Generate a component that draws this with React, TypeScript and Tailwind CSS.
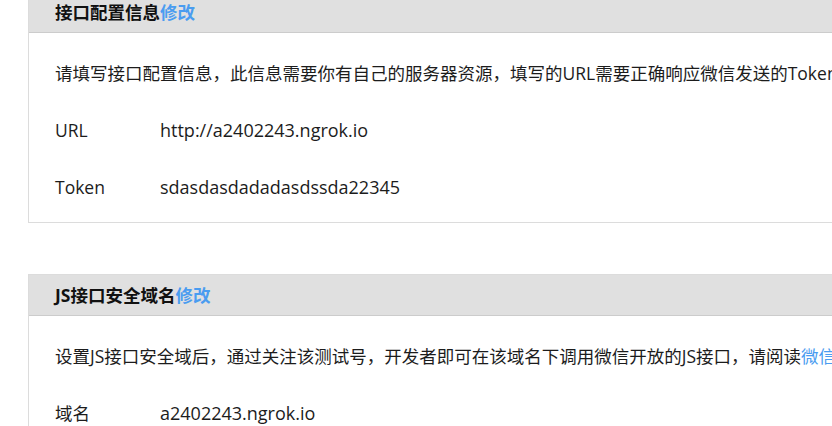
const rows1 = [
  { label: 'URL', value: 'http://a2402243.ngrok.io' },
  { label: 'Token', value: 'sdasdasdadadasdssda22345' },
];

function Panel({ title, children }: { title: string; children: React.ReactNode }) {
  return (
    <div className="border border-[#dcdcdc] bg-white">
      <div className="h-[41px] flex items-center pl-[26px] bg-[#e0e0e0] border-b border-[#cccccc] text-[17.5px] font-bold text-[#111]">
        <span>{title}</span>
        <a className="text-[#4a9cf0] cursor-pointer">修改</a>
      </div>
      <div className="pt-3 pb-[6px] pl-[26px] text-[17.5px] text-[#1c1c1c]">{children}</div>
    </div>
  );
}

function Row({ label, value }: { label: string; value: string }) {
  return (
    <div className="h-[57px] flex items-center whitespace-nowrap">
      <span className="w-[105px] shrink-0">{label}</span>
      <span className="text-[18px]">{value}</span>
    </div>
  );
}

export default function App() {
  return (
    <div
      className="w-[832px] h-[426px] overflow-hidden bg-white"
      style={{ fontFamily: '"Open Sans", "Noto Sans CJK SC", sans-serif' }}
    >
      <div className="-mt-[9px] ml-[28px] w-[900px] flex flex-col gap-[51px]">
        <Panel title="接口配置信息">
          <div className="h-[57px] flex items-center whitespace-nowrap">
            请填写接口配置信息，此信息需要你有自己的服务器资源，填写的URL需要正确响应微信发送的Token验证，请阅读消息接口使用指南。
          </div>
          {rows1.map(r => (
            <Row key={r.label} label={r.label} value={r.value} />
          ))}
        </Panel>

        <Panel title="JS接口安全域名">
          <div className="h-[57px] flex items-center whitespace-nowrap">
            设置JS接口安全域后，通过关注该测试号，开发者即可在该域名下调用微信开放的JS接口，请阅读
            <a className="text-[#4a9cf0] cursor-pointer">微信JS-SDK开发文档</a>。
          </div>
          <Row label="域名" value="a2402243.ngrok.io" />
        </Panel>
      </div>
    </div>
  );
}
